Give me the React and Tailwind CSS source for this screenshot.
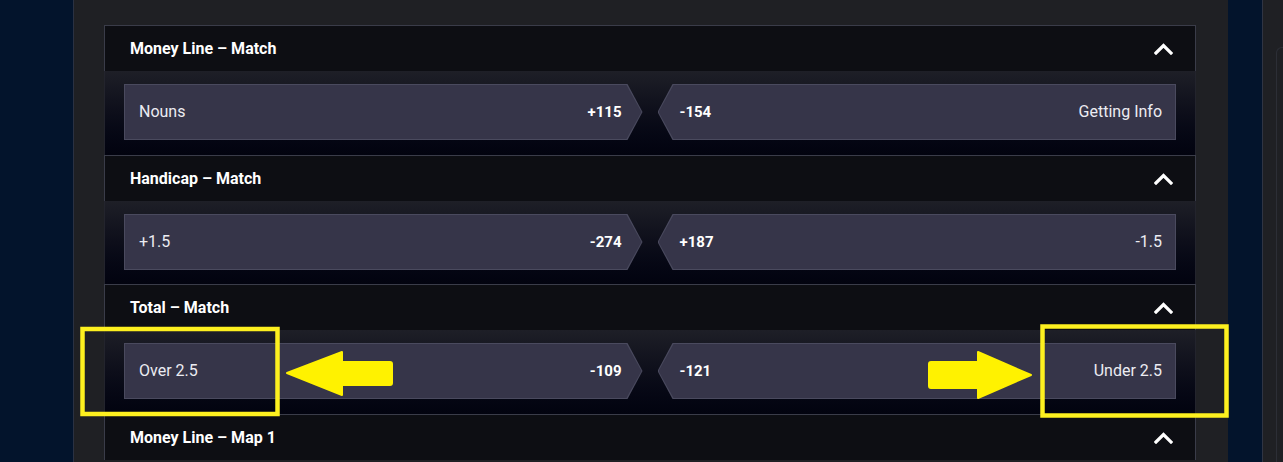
import React from "react";

const FONT = { fontFamily: "Roboto, 'Noto Sans', 'Liberation Sans', sans-serif" };

const sections = [
  { title: "Money Line – Match", l: ["Nouns", "+115"], r: ["-154", "Getting Info"], h: "h-[84px]" },
  { title: "Handicap – Match", l: ["+1.5", "-274"], r: ["+187", "-1.5"], h: "h-[83px]" },
  { title: "Total – Match", l: ["Over 2.5", "-109"], r: ["-121", "Under 2.5"], h: "h-[84px]" },
  { title: "Money Line – Map 1", l: null, r: null, h: "" },
];

function Chevron() {
  return (
    <svg width="19" height="13" viewBox="0 0 19 13" className="block">
      <polyline points="2,11 9.5,3.5 17,11" fill="none" stroke="#ffffff" strokeWidth="3.2" strokeLinecap="square" strokeLinejoin="miter" />
    </svg>
  );
}

function LeftBtn({ label, value }) {
  return (
    <div className="h-[56px] bg-[#4a4a5e] p-px [clip-path:polygon(0_0,calc(100%-15px)_0,100%_50%,calc(100%-15px)_100%,0_100%)]">
      <div className="flex h-full items-center justify-between bg-[#363549] pl-[14px] pr-[20px] [clip-path:polygon(0_0,calc(100%-15px)_0,100%_50%,calc(100%-15px)_100%,0_100%)]">
        <span className="text-[16px] text-[#ececf2]">{label}</span>
        <span className="text-[15px] font-bold text-white">{value}</span>
      </div>
    </div>
  );
}

function RightBtn({ label, value }) {
  return (
    <div className="h-[56px] bg-[#4a4a5e] p-px [clip-path:polygon(15px_0,100%_0,100%_100%,15px_100%,0_50%)]">
      <div className="flex h-full items-center justify-between bg-[#363549] pl-[21px] pr-[13px] [clip-path:polygon(15px_0,100%_0,100%_100%,15px_100%,0_50%)]">
        <span className="text-[15px] font-bold text-white">{value}</span>
        <span className="text-[16px] text-[#ececf2]">{label}</span>
      </div>
    </div>
  );
}

function Section({ s }) {
  return (
    <div>
      <div className="flex h-[46px] items-center justify-between border-x border-t border-[#3a3c49] bg-[#0d0e13] pl-[25px] pr-[22px]">
        <span className="text-[16px] font-bold text-white">{s.title}</span>
        <Chevron />
      </div>
      {s.l && (
        <div className={`${s.h} border-x border-[#23242d] bg-gradient-to-b from-[#1e1f27] via-[#0d0e1a] to-[#02030f] px-[19px] pt-[13px]`}>
          <div className="grid grid-cols-2 gap-[15px]">
            <LeftBtn label={s.l[0]} value={s.l[1]} />
            <RightBtn value={s.r[0]} label={s.r[1]} />
          </div>
        </div>
      )}
    </div>
  );
}

export default function App() {
  return (
    <div className="relative flex h-[462px] w-[1283px] overflow-hidden bg-[#03142c]" style={FONT}>
      <div className="w-[73px] shrink-0" />
      <div className="w-[1155px] shrink-0 border-l border-[#2a3142] bg-[#1f2024] pl-[30px] pr-[32px] pt-[25px]">
        {sections.map((s) => (
          <Section key={s.title} s={s} />
        ))}
      </div>
      <div className="w-[34px] shrink-0" />
      <div className="flex-1 border-l border-[#2f3443] bg-[#1f2024] pl-[13px] pt-[47px]">
        <div className="h-[420px] rounded-tl-[6px] border-l border-t border-[#2c2e36]" />
      </div>

      {/* annotation overlay */}
      <svg className="pointer-events-none absolute left-0 top-0" width="1283" height="462" viewBox="0 0 1283 462">
        <rect x="82.5" y="329" width="195" height="85" fill="none" stroke="#fdf01f" strokeWidth="4.5" />
        <rect x="1042.5" y="326.5" width="184" height="89" fill="none" stroke="#fdf01f" strokeWidth="4.5" />
        <path d="M287 373 L342 352 L342 362 L390 362 Q392 362 392 364 L392 383 Q392 385 390 385 L342 385 L342 395 Z" fill="#fff200" stroke="#fff200" strokeWidth="2" strokeLinejoin="round" />
        <path d="M1031 375 L978 352 L978 362 L931 362 Q929 362 929 364 L929 386 Q929 388 931 388 L978 388 L978 398 Z" fill="#fff200" stroke="#fff200" strokeWidth="2" strokeLinejoin="round" />
      </svg>
    </div>
  );
}
